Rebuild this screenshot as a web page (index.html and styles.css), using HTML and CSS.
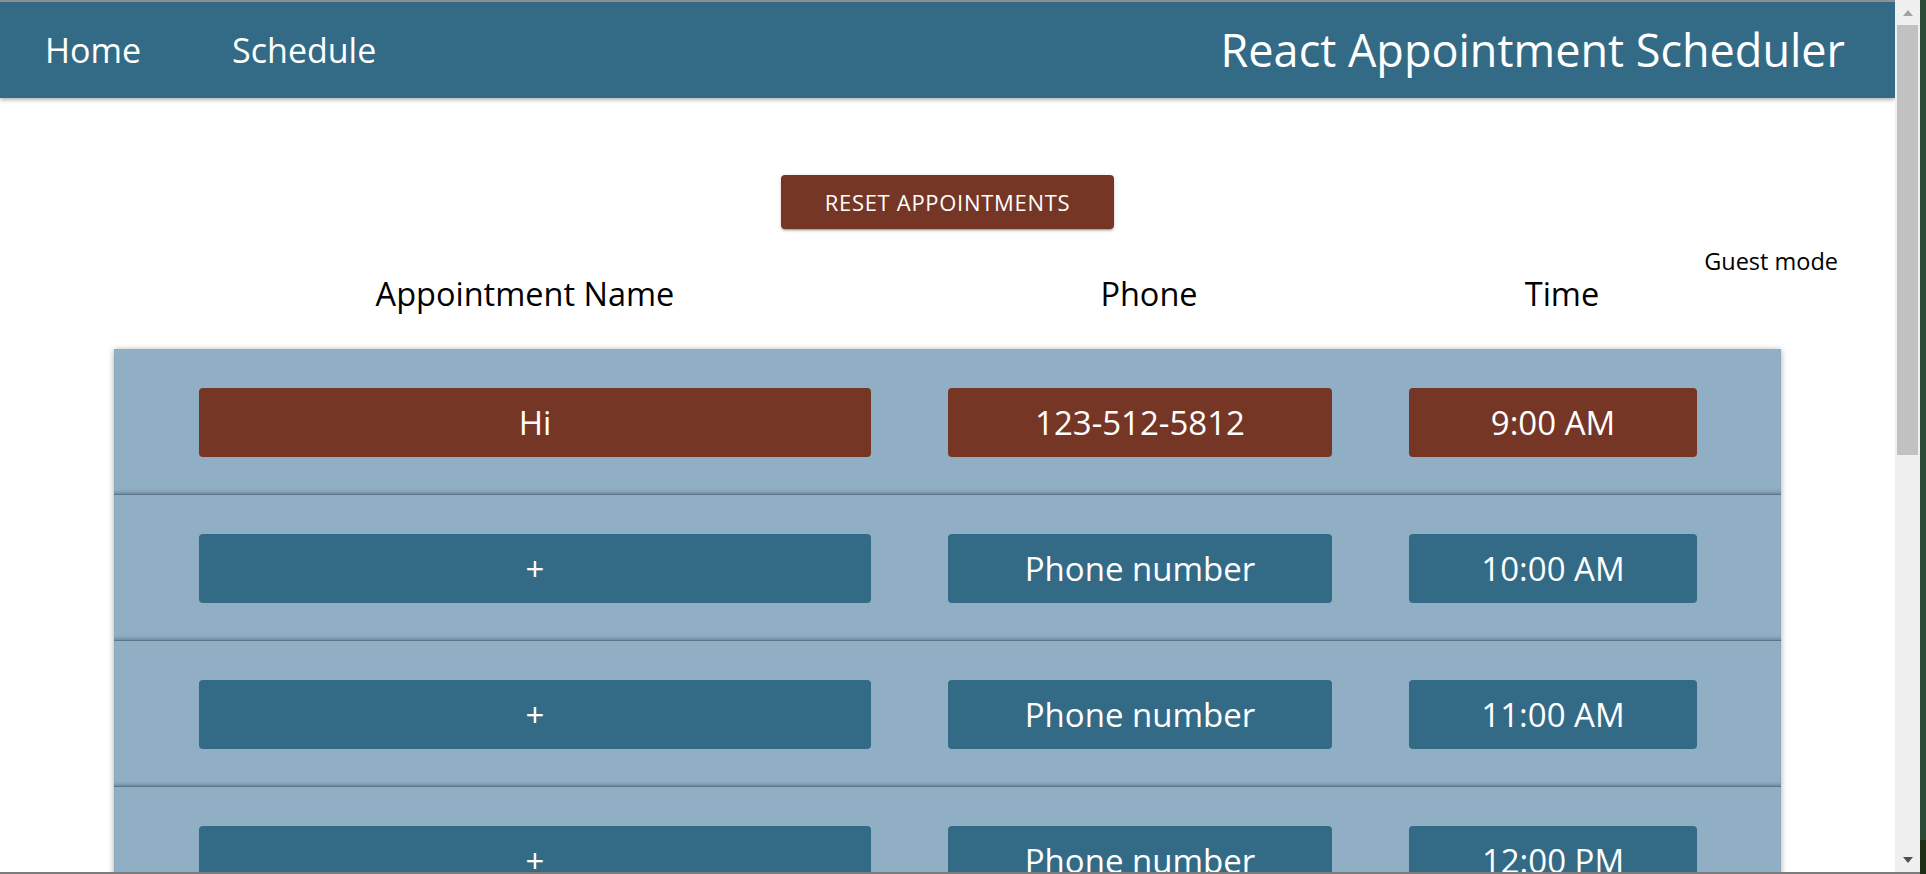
FILE: index.html
```html
<!DOCTYPE html>
<html lang="en">
<head>
<meta charset="utf-8">
<title>React Appointment Scheduler</title>
<link rel="stylesheet" href="styles.css">
</head>
<body>
<div class="window">
  <div class="page">
    <header class="navbar">
      <nav class="nav-links">
        <a class="nav-link" href="#">Home</a>
        <a class="nav-link" href="#">Schedule</a>
      </nav>
      <h1 class="brand">React Appointment Scheduler</h1>
    </header>
    <main class="content">
      <div class="actions">
        <button class="reset-btn" type="button">Reset Appointments</button>
      </div>
      <div class="status"><span>Guest mode</span></div>
      <div class="col-heads">
        <h2 class="col-head">Appointment Name</h2>
        <h2 class="col-head">Phone</h2>
        <h2 class="col-head">Time</h2>
      </div>
      <section class="sheet">
        <div class="row">
          <div class="cell booked">Hi</div>
          <div class="cell booked">123-512-5812</div>
          <div class="cell booked">9:00 AM</div>
        </div>
        <div class="row">
          <div class="cell">+</div>
          <div class="cell">Phone number</div>
          <div class="cell">10:00 AM</div>
        </div>
        <div class="row">
          <div class="cell">+</div>
          <div class="cell">Phone number</div>
          <div class="cell">11:00 AM</div>
        </div>
        <div class="row">
          <div class="cell">+</div>
          <div class="cell">Phone number</div>
          <div class="cell">12:00 PM</div>
        </div>
      </section>
    </main>
  </div>
  <div class="scrollbar">
    <div class="sb-btn">
      <svg width="10" height="6" viewBox="0 0 10 6"><polygon points="0,6 5,0 10,6" fill="#a3a3a3"/></svg>
    </div>
    <div class="sb-thumb"></div>
    <div class="sb-track"></div>
    <div class="sb-btn">
      <svg width="10" height="6" viewBox="0 0 10 6"><polygon points="0,0 10,0 5,6" fill="#505050"/></svg>
    </div>
  </div>
  <div class="edge"></div>
</div>
</body>
</html>
```

FILE: styles.css
```css
html, body {
  margin: 0;
  height: 874px;
  overflow: hidden;
}

body {
  font-family: "Open Sans", "Noto Sans", sans-serif;
  background: #ffffff;
  color: #000000;
}

.window {
  display: flex;
  height: 874px;
}

.page {
  flex: 0 0 1895px;
  height: 874px;
  box-sizing: border-box;
  border-top: 2px solid #8e8e8e;
  border-bottom: 2px solid #7c7c7c;
  overflow: hidden;
  background: #ffffff;
}

.navbar {
  height: 96px;
  background: #336b87;
  display: flex;
  align-items: center;
  justify-content: space-between;
  padding: 0 50px 0 45px;
  box-shadow: 0 2px 4px rgba(0, 0, 0, 0.3);
}

.nav-links {
  display: flex;
  gap: 91px;
}

.nav-link {
  color: #ffffff;
  text-decoration: none;
  font-size: 34px;
  line-height: 46px;
}

.brand {
  margin: 0;
  color: #ffffff;
  font-size: 45px;
  font-weight: 400;
  line-height: 60px;
}

.actions {
  display: flex;
  justify-content: center;
  padding-top: 77px;
}

.reset-btn {
  width: 333px;
  height: 54px;
  border: 0;
  border-radius: 4px;
  background: #763626;
  color: #ffffff;
  font-family: "Open Sans", "Noto Sans", sans-serif;
  font-size: 22px;
  letter-spacing: 0.7px;
  text-transform: uppercase;
  box-shadow: 0 3px 1px -2px rgba(0, 0, 0, 0.2), 0 2px 2px 0 rgba(0, 0, 0, 0.14), 0 1px 5px 0 rgba(0, 0, 0, 0.12);
  padding: 0;
}

.status {
  display: flex;
  justify-content: flex-end;
  padding-right: 57px;
  margin-top: 17px;
  font-size: 23.5px;
  line-height: 31px;
}

.col-heads {
  display: grid;
  grid-template-columns: 820px 428px 398px;
  padding-left: 115px;
  margin-top: -5px;
}

.col-head {
  margin: 0;
  font-size: 32.5px;
  font-weight: 400;
  line-height: 44px;
  text-align: center;
}

.sheet {
  width: 1667px;
  margin: 33px auto 0;
  background: #90afc5;
  box-shadow: 0 1px 6px rgba(0, 0, 0, 0.35);
}

.row {
  display: grid;
  grid-template-columns: 672px 384px 288px;
  column-gap: 77px;
  padding: 39px 0 37px 85px;
  border-bottom: 1px solid rgba(50, 70, 85, 0.55);
  box-shadow: inset 0 -4px 4px -3px rgba(0, 0, 0, 0.3);
}

.cell {
  height: 69px;
  border-radius: 4px;
  background: #336b87;
  color: #ffffff;
  font-size: 33px;
  display: flex;
  align-items: center;
  justify-content: center;
}

.cell.booked {
  background: #763626;
}

.scrollbar {
  flex: 0 0 25px;
  height: 874px;
  box-sizing: border-box;
  border-bottom: 2px solid #7c7c7c;
  background: #f0f0f0;
  display: flex;
  flex-direction: column;
}

.sb-btn {
  height: 25px;
  display: flex;
  align-items: center;
  justify-content: center;
}

.sb-thumb {
  height: 430px;
  margin: 0 2px;
  background: #c1c1c1;
}

.sb-track {
  flex: 1;
}

.edge {
  flex: 0 0 6px;
  height: 874px;
  background: linear-gradient(to bottom, #2d4a36 0, #2d4a36 840px, #1f2e17 840px);
}
```
